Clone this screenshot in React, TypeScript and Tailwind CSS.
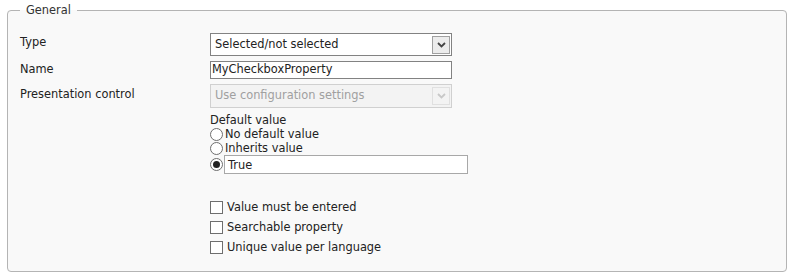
import React from "react";

const Chevron = ({ color }: { color: string }) => (
  <svg width="9" height="6" viewBox="0 0 9 6" className="block">
    <path d="M1 1 L4.5 4.5 L8 1" fill="none" stroke={color} strokeWidth="1.8" />
  </svg>
);

const Radio = ({ checked }: { checked?: boolean }) => (
  <span className="w-[13px] h-[13px] rounded-full border border-[#6e6e6e] bg-white flex items-center justify-center shrink-0">
    {checked && <span className="w-[7px] h-[7px] rounded-full bg-[#222]" />}
  </span>
);

const Check = () => (
  <span className="w-[13px] h-[13px] border border-[#6e6e6e] bg-white shrink-0" />
);

export default function App() {
  return (
    <div
      className="bg-white w-[797px] h-[280px] pt-[3px] pl-[7px] text-[11.4px] text-[#222]"
      style={{ fontFamily: '"DejaVu Sans", Verdana, sans-serif' }}
    >
      <fieldset className="w-[780px] h-[269px] border border-[#b4b4b4] rounded-[4px] bg-[#f9f9f9] pl-[12px]">
        <legend className="px-[6px] leading-[14px] text-[#333]">General</legend>
        <div className="grid grid-cols-[190px_1fr] mt-[16px]">
          <div className="leading-[14px] pt-[2px]">Type</div>
          <div className="w-[242px] h-[23px] border border-[#828282] bg-white flex items-center justify-between pl-[4px] pr-[1px]">
            <span>Selected/not selected</span>
            <span className="w-[18px] h-[18px] border border-[#a0a0a0] bg-[#ececec] flex items-center justify-center">
              <Chevron color="#444" />
            </span>
          </div>

          <div className="leading-[14px] mt-[6px]">Name</div>
          <div className="w-[242px] h-[18px] mt-[5px] border border-[#828282] bg-white flex items-center pl-[1px]">
            MyCheckboxProperty
          </div>

          <div className="leading-[14px] mt-[8px]">Presentation control</div>
          <div className="w-[242px] h-[24px] mt-[5px] border border-[#d0d0d0] bg-[#f3f3f3] flex items-center justify-between pl-[4px] pr-[1px] text-[#a0a0a0]">
            <span>Use configuration settings</span>
            <span className="w-[18px] h-[18px] border border-[#e0e0e0] flex items-center justify-center">
              <Chevron color="#c8c8c8" />
            </span>
          </div>

          <div />
          <div className="mt-[5px] flex flex-col leading-[14px]">
            <div>Default value</div>
            <div className="flex items-center gap-[2px]">
              <Radio />
              <span>No default value</span>
            </div>
            <div className="flex items-center gap-[2px]">
              <Radio />
              <span>Inherits value</span>
            </div>
            <div className="flex items-center gap-[1px]">
              <Radio checked />
              <span className="w-[244px] h-[19px] border border-[#a8a8a8] bg-white flex items-center pl-[3px]">True</span>
            </div>

            <div className="mt-[26px] flex flex-col gap-[6px]">
              <div className="flex items-center gap-[4px]">
                <Check />
                <span>Value must be entered</span>
              </div>
              <div className="flex items-center gap-[4px]">
                <Check />
                <span>Searchable property</span>
              </div>
              <div className="flex items-center gap-[4px]">
                <Check />
                <span>Unique value per language</span>
              </div>
            </div>
          </div>
        </div>
      </fieldset>
    </div>
  );
}
